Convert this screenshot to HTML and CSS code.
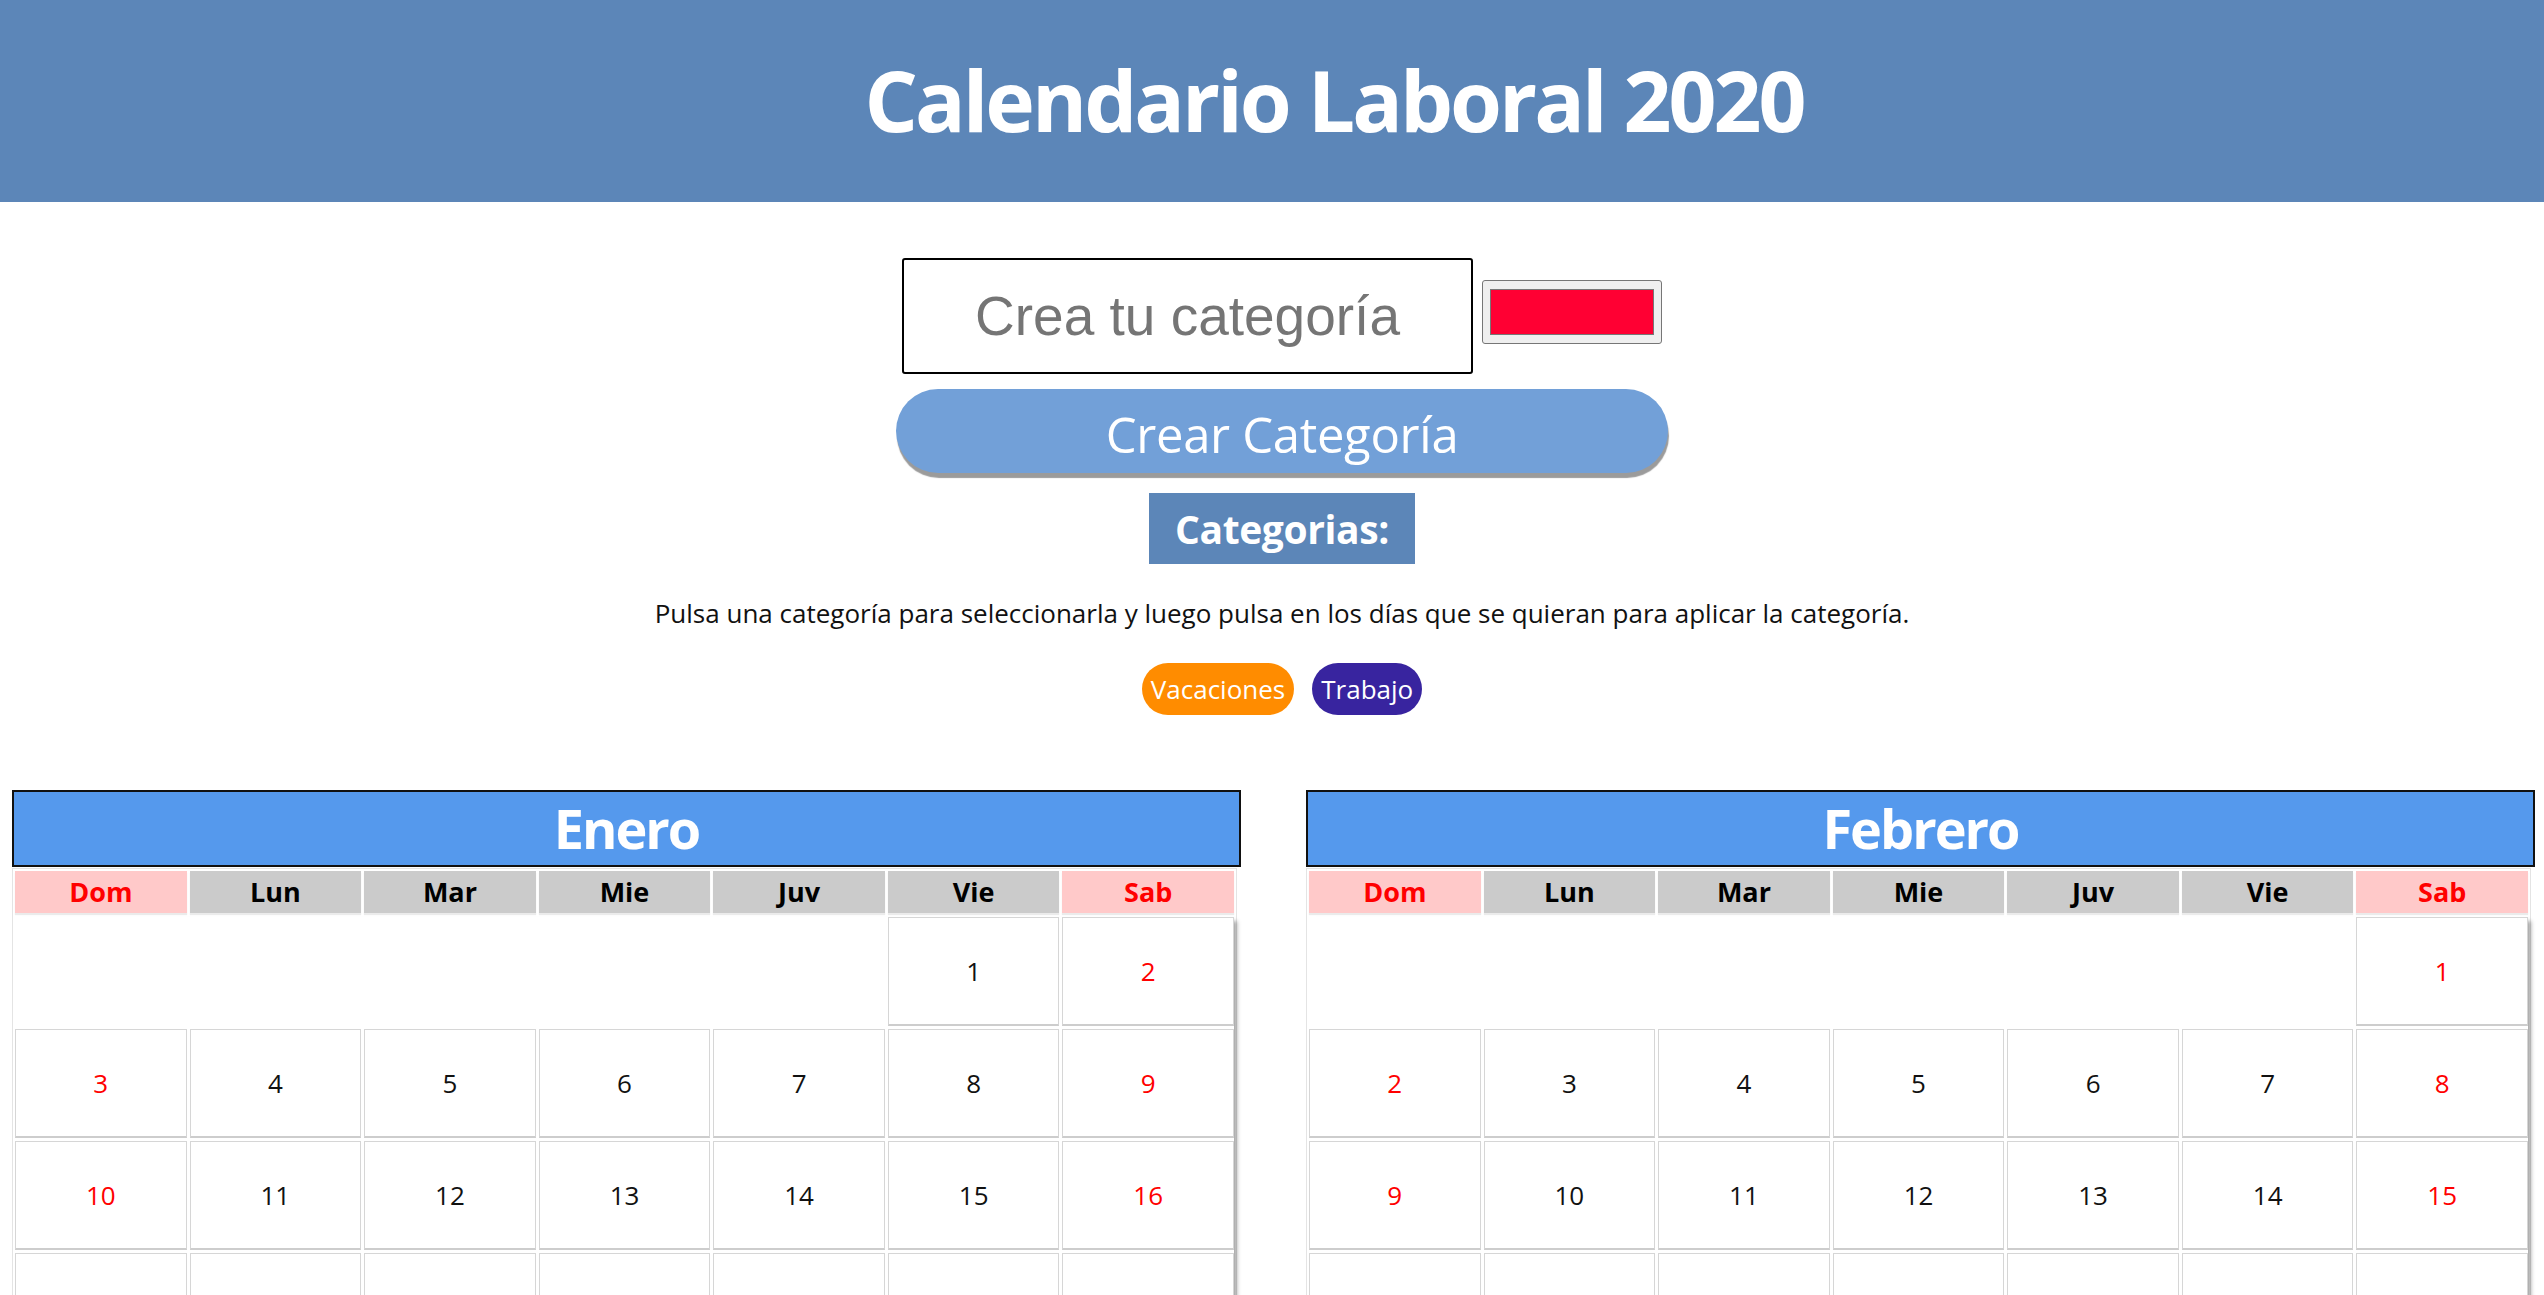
FILE: index.html
```html
<!DOCTYPE html>
<html lang="es">
<head>
<meta charset="utf-8">
<title>Calendario Laboral 2020</title>
<link rel="stylesheet" href="styles.css">
</head>
<body>
<header class="topbar">
  <h1 class="title">Calendario Laboral 2020</h1>
</header>
<main class="page">
  <section class="panel">
    <div class="create-row">
      <input class="cat-input" type="text" placeholder="Crea tu categoría">
      <input class="color-input" type="color" value="#ff0033">
    </div>
    <button class="create-btn" type="button">Crear Categoría</button>
    <h2 class="cat-title">Categorias:</h2>
    <p class="hint">Pulsa una categoría para seleccionarla y luego pulsa en los días que se quieran para aplicar la categoría.</p>
    <div class="pills">
      <span class="pill pill-vac">Vacaciones</span>
      <span class="pill pill-trab">Trabajo</span>
    </div>
  </section>

  <section class="months">
    <div class="month">
      <h3 class="month-name">Enero</h3>
      <div class="cal">
        <div class="dow">
          <div class="dow-cell wkend">Dom</div><div class="dow-cell">Lun</div><div class="dow-cell">Mar</div><div class="dow-cell">Mie</div><div class="dow-cell">Juv</div><div class="dow-cell">Vie</div><div class="dow-cell wkend">Sab</div>
        </div>
        <div class="days">
          <div class="empty"></div><div class="empty"></div><div class="empty"></div><div class="empty"></div><div class="empty"></div><div class="day">1</div><div class="day red">2</div>
          <div class="day red">3</div><div class="day">4</div><div class="day">5</div><div class="day">6</div><div class="day">7</div><div class="day">8</div><div class="day red">9</div>
          <div class="day red">10</div><div class="day">11</div><div class="day">12</div><div class="day">13</div><div class="day">14</div><div class="day">15</div><div class="day red">16</div>
          <div class="day red">17</div><div class="day">18</div><div class="day">19</div><div class="day">20</div><div class="day">21</div><div class="day">22</div><div class="day red">23</div>
          <div class="day red">24</div><div class="day">25</div><div class="day">26</div><div class="day">27</div><div class="day">28</div><div class="day">29</div><div class="day red">30</div>
          <div class="day red">31</div>
        </div>
      </div>
    </div>

    <div class="month">
      <h3 class="month-name">Febrero</h3>
      <div class="cal">
        <div class="dow">
          <div class="dow-cell wkend">Dom</div><div class="dow-cell">Lun</div><div class="dow-cell">Mar</div><div class="dow-cell">Mie</div><div class="dow-cell">Juv</div><div class="dow-cell">Vie</div><div class="dow-cell wkend">Sab</div>
        </div>
        <div class="days">
          <div class="empty"></div><div class="empty"></div><div class="empty"></div><div class="empty"></div><div class="empty"></div><div class="empty"></div><div class="day red">1</div>
          <div class="day red">2</div><div class="day">3</div><div class="day">4</div><div class="day">5</div><div class="day">6</div><div class="day">7</div><div class="day red">8</div>
          <div class="day red">9</div><div class="day">10</div><div class="day">11</div><div class="day">12</div><div class="day">13</div><div class="day">14</div><div class="day red">15</div>
          <div class="day red">16</div><div class="day">17</div><div class="day">18</div><div class="day">19</div><div class="day">20</div><div class="day">21</div><div class="day red">22</div>
          <div class="day red">23</div><div class="day">24</div><div class="day">25</div><div class="day">26</div><div class="day">27</div><div class="day">28</div><div class="day red">29</div>
        </div>
      </div>
    </div>
  </section>
</main>
</body>
</html>
```

FILE: styles.css
```css
html {
  scrollbar-width: none;
}
html::-webkit-scrollbar {
  display: none;
}

body {
  margin: 0;
  font-family: "Open Sans", "Noto Sans", sans-serif;
  color: #111;
  background: #fff;
}

/* ---------- header ---------- */
.topbar {
  height: 202px;
  background: #5c86b8;
  display: flex;
  align-items: center;
  justify-content: center;
}

.title {
  margin: 0 0 2px;
  padding-left: 124px;
  font-size: 84px;
  font-weight: 700;
  letter-spacing: -3px;
  color: #fff;
  line-height: 1.362;
}

/* ---------- creation panel ---------- */
.panel {
  padding-left: 20px;
  display: flex;
  flex-direction: column;
  align-items: center;
}

.create-row {
  margin-top: 56px;
  display: flex;
  align-items: flex-start;
  gap: 9px;
}

.cat-input {
  box-sizing: border-box;
  width: 571px;
  height: 116px;
  border: 2px solid #000;
  border-radius: 3px;
  padding: 0 10px;
  font-family: "Liberation Sans", Arial, sans-serif;
  font-size: 55px;
  text-align: center;
  color: #222;
  background: #fff;
}
.cat-input::placeholder {
  color: #757575;
}

.color-input {
  box-sizing: border-box;
  width: 180px;
  height: 64px;
  margin-top: 22px;
  padding: 0;
  border: 1px solid #767676;
  border-radius: 3px;
  background: #efefef;
}
.color-input::-webkit-color-swatch-wrapper {
  padding: 8px 7px;
}
.color-input::-webkit-color-swatch {
  border: 1px solid #777;
  border-radius: 0;
}

.create-btn {
  box-sizing: border-box;
  width: 772px;
  height: 84px;
  margin-top: 15px;
  padding: 5px 0 0;
  border: none;
  border-radius: 42px;
  background: #72a0d8;
  color: #fff;
  font-family: "Open Sans", "Noto Sans", sans-serif;
  font-size: 49px;
  letter-spacing: -0.3px;
  box-shadow: 1px 5px 1px #9b9b9b;
}

.cat-title {
  margin: 20px 0 0;
  height: 71px;
  padding: 0 26px;
  background: #5c86b8;
  color: #fff;
  font-size: 39px;
  font-weight: 700;
  line-height: 71px;
  letter-spacing: -0.4px;
}

.hint {
  margin: 31px 0 0;
  font-size: 26px;
  color: #111;
}

.pills {
  margin-top: 32px;
  display: flex;
  gap: 18px;
}

.pill {
  height: 52px;
  padding: 0 9px;
  border-radius: 26px;
  color: #fff;
  font-size: 26px;
  line-height: 52px;
}
.pill-vac {
  background: #ff8c00;
}
.pill-trab {
  background: #38249f;
}

/* ---------- calendars ---------- */
.months {
  margin-top: 75px;
  padding-left: 12px;
  display: flex;
  align-items: flex-start;
  gap: 65px;
}

.month {
  width: 1229px;
}

.month-name {
  box-sizing: border-box;
  height: 77px;
  margin: 0;
  border: 2px solid #111;
  background: #5599ed;
  color: #fff;
  font-size: 54px;
  font-weight: 700;
  letter-spacing: -2px;
  line-height: 73px;
  text-align: center;
}

.cal {
  box-sizing: border-box;
  width: 1225px;
  margin-top: 1px;
  padding: 2px;
  border: 1px solid #e4e4e4;
}

.dow {
  display: grid;
  grid-template-columns: repeat(7, 1fr);
  gap: 3px;
}

.dow-cell {
  height: 42px;
  background: #cbcbcb;
  color: #000;
  font-size: 27px;
  font-weight: 700;
  line-height: 42px;
  text-align: center;
  box-shadow: 0 2px 1px rgba(0, 0, 0, 0.08);
}
.dow-cell.wkend {
  background: #ffc9c9;
  color: #ff0000;
}

.days {
  margin-top: 4px;
  display: grid;
  grid-template-columns: repeat(7, 1fr);
  grid-auto-rows: 109px;
  gap: 3px;
  box-shadow: 5px 2px 4px -2px rgba(0, 0, 0, 0.35);
}

.day {
  box-sizing: border-box;
  border: 1px solid #d6d6d6;
  border-bottom: 2px solid #cdcdcd;
  display: flex;
  align-items: center;
  justify-content: center;
  font-size: 26px;
  color: #111;
}
.day.red {
  color: #ff0000;
}
```
